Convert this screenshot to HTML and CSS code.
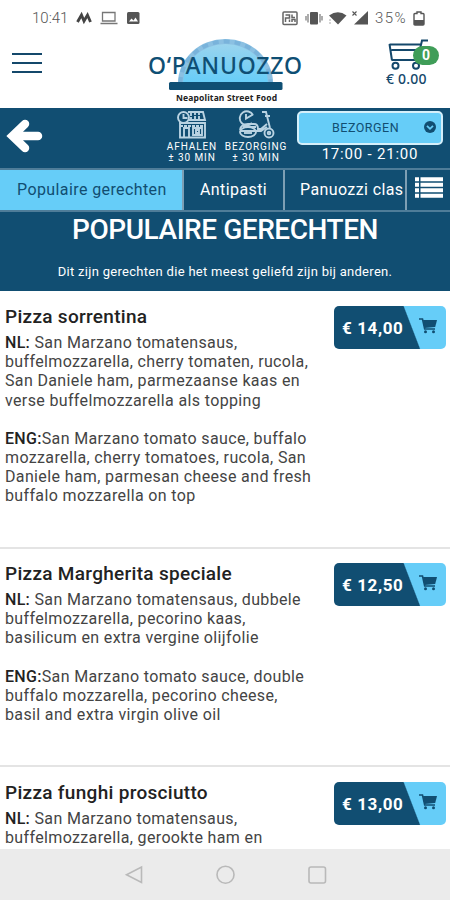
FILE: index.html
```html
<!DOCTYPE html>
<html lang="nl">
<head>
  <meta charset="UTF-8">
  <title>O'Panuozzo - Bestellen</title>
  <meta name="viewport" content="width=device-width, initial-scale=1.0">
  <link rel="stylesheet" href="styles.css">
</head>
<body>

  <svg class="sprite" width="0" height="0">
    <symbol id="cart" viewBox="0 0 18 16">
      <path d="M0 1h3.500l2.200 10H16" fill="none" stroke="currentColor" stroke-width="1.600"/>
      <path d="M4 2h14l-1.800 7L5.500 10z" fill="currentColor"/>
      <circle cx="6.500" cy="13.700" r="1.500" fill="currentColor"/>
      <circle cx="14.500" cy="13.700" r="1.500" fill="currentColor"/>
    </symbol>
  </svg>

  <div class="status">
    <span class="clock">10:41</span>
    <svg class="status-left" width="66" height="14" viewBox="0 0 66 14">
      <path d="M1.500 11 5.500 4 8 10 11.500 4 14.500 11" fill="none" stroke="#444" stroke-width="2.800"/>
      <path d="M26.500 1.500h12.500v8.500H26.500zM24.500 12.500h17" fill="none" stroke="#777" stroke-width="1.300"/>
      <rect x="51" y="1" width="12.500" height="12" rx="1.500" fill="#555"/>
      <path d="M53 10.500l2.500-3 2 2 2-3 2.500 4z" fill="#fff"/>
    </svg>
    <svg class="status-right" width="88" height="16" viewBox="0 0 88 16">
      <rect x="1" y="2" width="14" height="12.500" rx="1" fill="none" stroke="#666" stroke-width="1.500"/>
      <path d="M3.500 5h4v3h-4v4M7.500 12V9.500M10 4.500v3h3M10 12V9.500h3V12" fill="none" stroke="#666" stroke-width="1.500"/>
      <rect x="28" y="2" width="8" height="12.500" rx="1" fill="#555"/>
      <path d="M26 4v8.500M38 4v8.500M24 6v4.500M40 6v4.500" stroke="#777" stroke-width="1.200"/>
      <path d="M47 5.500q9-6.500 17.500 0L56 14.500z" fill="#555"/>
      <path d="M47 10h2M47 13h2" stroke="#aaa"/>
      <path d="M86 1v13.500H72z" fill="#555"/>
      <path d="M70.500 1.500l4 4M74.500 1.500l-4 4" stroke="#555" stroke-width="1.100"/>
    </svg>
    <span class="battery-text">35%</span>
    <svg width="12" height="15" viewBox="0 0 12 15">
      <path d="M1 3.500q0-1 1-1h2V1h4v1.500h2q1 0 1 1V13q0 1-1 1H2q-1 0-1-1z" fill="none" stroke="#555" stroke-width="1.400"/>
      <path d="M1 9h10v5H1z" fill="#555"/>
    </svg>
  </div>

  <header class="header">
    <div class="burger"><span></span><span></span><span></span></div>
    <svg class="logo" width="160" height="68" viewBox="145 38 160 68">
      <defs>
        <linearGradient id="sky" x1="0" y1="0" x2="0" y2="1">
          <stop offset="0" stop-color="#9ad4ee"/>
          <stop offset="1" stop-color="#66cdf8"/>
        </linearGradient>
      </defs>
      <path d="M178 83a47.500 44 0 0 1 95 0z" fill="#8bc0e2"/>
      <path d="M180.500 83a45 41.500 0 0 1 90 0" fill="none" stroke="#79b3db" stroke-width="4" stroke-dasharray="6 5"/>
      <path d="M183 83a42.500 39 0 0 1 85 0z" fill="url(#sky)"/>
      <rect x="169" y="82" width="113.500" height="8" rx="1.500" fill="#0f4f74"/>
      <text class="logo-name" x="148" y="73.500" textLength="154">O‘PANUOZZO</text>
      <text class="logo-sub" x="176" y="100.500" textLength="101">Neapolitan Street Food</text>
    </svg>
    <div class="basket">
      <svg width="42" height="32" viewBox="0 0 42 32">
        <path d="M40 2.500h-6L29.500 22H4M1.500 6.500h31.500M1.500 6l2.500 16.500M3.500 12h27" fill="none" stroke="#14486b" stroke-width="2"/>
        <circle cx="7.500" cy="27.800" r="3" fill="none" stroke="#14486b" stroke-width="2"/>
        <circle cx="28" cy="27.800" r="3" fill="none" stroke="#14486b" stroke-width="2"/>
      </svg>
      <span class="badge">0</span>
      <div class="total">€ 0.00</div>
    </div>
  </header>

  <section class="delivery">
    <svg class="back" width="38" height="36" viewBox="0 0 38 36">
      <path d="M20 6 7.500 18 20 30M9 18h24" fill="none" stroke="#fff" stroke-width="8.500" stroke-linecap="round"/>
    </svg>
    <div class="method">
      <svg width="32" height="29" viewBox="0 0 32 29" fill="none" stroke="#b9d3e2" stroke-width="1.900">
        <path d="M12 2h15l2 8H11M4 14v13.500h25V12M3 13h26"/>
        <path d="M15 3v8M19 2v9M23 2v9M4 16h25" stroke-dasharray="3 1"/>
        <path d="M8 27V18h5v9M17 18h9v7h-9zM20 20h3v3h-3z"/>
        <circle cx="7.500" cy="7.500" r="5.500" fill="#114e72"/>
        <path d="M7.500 4v4h4"/>
      </svg>
      <span>AFHALEN</span>
      <span>± 30 MIN</span>
    </div>
    <div class="method bezorging">
      <svg width="38" height="29" viewBox="0 0 38 29" fill="none" stroke="#b9d3e2" stroke-width="1.900">
        <path d="M16 5a7 7 0 1 0-1 8M9 4v4.500l7-4M25 2h4l4 16M28 6h5"/>
        <path d="M3 20q1-6 8-6h6q4 0 4 5h3l6-5M3 21h21l6-4M6 17h13"/>
        <ellipse cx="11" cy="22" rx="8" ry="5"/>
        <path d="M7 23h8"/>
        <circle cx="32" cy="23" r="4.500"/>
        <circle cx="32" cy="23" r="1.300"/>
      </svg>
      <span>BEZORGING</span>
      <span>± 30 MIN</span>
    </div>
    <div class="choice">
      <div class="select">
        <span>BEZORGEN</span>
        <svg width="12" height="12" viewBox="0 0 12 12">
          <circle cx="6" cy="6" r="6" fill="#114e72"/>
          <path d="M3 4.800 6 7.800l3-3" fill="none" stroke="#66cdf8" stroke-width="1.800"/>
        </svg>
      </div>
      <div class="hours">17:00 - 21:00</div>
    </div>
  </section>

  <nav class="tabs">
    <div class="tab active">Populaire gerechten</div>
    <div class="tab antipasti">Antipasti</div>
    <div class="tab panuozzi">Panuozzi clas</div>
    <div class="tab list">
      <svg width="28" height="21" viewBox="0 0 28 21">
        <path d="M0 2.200h4M0 7.700h4M0 13.200h4M0 18.700h4M5.500 2.200H28M5.500 7.700H28M5.500 13.200H28M5.500 18.700H28" stroke="#fff" stroke-width="4"/>
      </svg>
    </div>
  </nav>

  <section class="intro">
    <h1>POPULAIRE GERECHTEN</h1>
    <p>Dit zijn gerechten die het meest geliefd zijn bij anderen.</p>
  </section>

  <main class="menu">
    <article class="dish sorrentina">
      <div class="info">
        <h2>Pizza sorrentina</h2>
        <p><b>NL:</b> San Marzano tomatensaus,<br>buffelmozzarella, cherry tomaten, rucola,<br>San Daniele ham, parmezaanse kaas en<br>verse buffelmozzarella als topping</p>
        <p><b>ENG:</b>San Marzano tomato sauce, buffalo<br>mozzarella, cherry tomatoes, rucola, San<br>Daniele ham, parmesan cheese and fresh<br>buffalo mozzarella on top</p>
      </div>
      <div class="price"><span>€ 14,00</span><svg width="18" height="16"><use href="#cart"/></svg></div>
    </article>

    <article class="dish margherita">
      <div class="info">
        <h2>Pizza Margherita speciale</h2>
        <p><b>NL:</b> San Marzano tomatensaus, dubbele<br>buffelmozzarella, pecorino kaas,<br>basilicum en extra vergine olijfolie</p>
        <p><b>ENG:</b>San Marzano tomato sauce, double<br>buffalo mozzarella, pecorino cheese,<br>basil and extra virgin olive oil</p>
      </div>
      <div class="price"><span>€ 12,50</span><svg width="18" height="16"><use href="#cart"/></svg></div>
    </article>

    <article class="dish">
      <div class="info">
        <h2>Pizza funghi prosciutto</h2>
        <p><b>NL:</b> San Marzano tomatensaus,<br>buffelmozzarella, gerookte ham en</p>
      </div>
      <div class="price"><span>€ 13,00</span><svg width="18" height="16"><use href="#cart"/></svg></div>
    </article>
  </main>

  <footer class="navbar">
    <svg width="20" height="20" viewBox="0 0 20 20"><path d="M18.500 2v15.500L3.500 9.700z"/></svg>
    <svg width="20" height="20" viewBox="0 0 20 20"><circle cx="10.500" cy="9.700" r="8.500"/></svg>
    <svg width="20" height="20" viewBox="0 0 20 20"><rect x="2" y="2" width="16.500" height="16" rx="2"/></svg>
  </footer>

</body>
</html>
```
FILE: styles.css
```css
* {
  box-sizing: border-box;
}

body {
  margin: 0;
  width: 450px;
  height: 900px;
  overflow: hidden;
  display: flex;
  flex-direction: column;
  font-family: Roboto, Arial, sans-serif;
  background-color: #ffffff;
  color: #222;
}

svg {
  display: block;
  flex: none;
}

.sprite {
  display: none;
}

h1, h2, p {
  margin: 0;
}

/* status bar */
.status {
  height: 36px;
  flex: none;
  display: flex;
  align-items: center;
  padding: 0 25px 0 32px;
  font-size: 15px;
  font-weight: 300;
  color: #555;
}

.clock {
  width: 44px;
}

.status-right {
  margin-left: auto;
}

.battery-text {
  width: 38px;
  margin-left: 5px;
  letter-spacing: 1.4px;
}

/* header */
.header {
  height: 72px;
  flex: none;
  display: flex;
  align-items: flex-start;
  padding: 2px 10px 0 12px;
}

.burger {
  width: 30px;
  margin-top: 15px;
  display: flex;
  flex-direction: column;
  gap: 7px;
}

.burger span {
  height: 2px;
  background-color: #14486b;
}

.logo {
  margin-left: 103px;
}

.logo-name {
  font-family: "Noto Sans", sans-serif;
  font-size: 23px;
  font-weight: 500;
  fill: #0f4f74;
}

.logo-sub {
  font-family: "Noto Sans", sans-serif;
  font-size: 8.5px;
  font-weight: 700;
  fill: #222;
}

.basket {
  position: relative;
  width: 56px;
  margin-left: auto;
  padding-left: 2px;
}

.basket svg {
  margin-left: 2px;
}

.badge {
  position: absolute;
  left: 29px;
  top: 8px;
  width: 26px;
  height: 19px;
  border-radius: 10px;
  background-color: #3f9d58;
  color: #fff;
  font-size: 14px;
  font-weight: 700;
  line-height: 19px;
  text-align: center;
}

.total {
  font-family: "Noto Sans", sans-serif;
  font-size: 14px;
  font-weight: 500;
  line-height: 18px;
  letter-spacing: 0.2px;
  color: #14486b;
}

/* delivery bar */
.delivery {
  height: 60px;
  flex: none;
  display: flex;
  background-color: #114e72;
  color: #fff;
  padding-right: 7px;
}

.back {
  margin: 10px 0 0 5px;
}

.method {
  width: 54px;
  margin-left: 122px;
  padding-top: 2px;
  display: flex;
  flex-direction: column;
  align-items: center;
  font-size: 10px;
  line-height: 11px;
  letter-spacing: 0.9px;
  white-space: nowrap;
}

.method svg {
  margin-bottom: 2px;
}

.bezorging {
  width: 64px;
  margin-left: 5px;
}

.choice {
  width: 146px;
  margin: 3px 0 0 auto;
}

.select {
  height: 34px;
  border: 2px solid #d5effa;
  border-radius: 5px;
  background-color: #66cdf8;
  color: #114e72;
  display: flex;
  align-items: center;
  justify-content: space-between;
  padding: 0 5px 2px 33px;
  font-size: 12.5px;
  letter-spacing: 0.5px;
}

.hours {
  font-size: 15px;
  line-height: 19px;
  letter-spacing: 0.8px;
  text-align: center;
}

/* category tabs */
.tabs {
  height: 44px;
  flex: none;
  display: flex;
  background-color: #114e72;
  border-top: 2px solid #4f7d99;
  border-bottom: 2px solid #4f7d99;
}

.tab {
  padding-left: 16px;
  border-right: 2px solid #7d9fb4;
  color: #fff;
  font-size: 16px;
  line-height: 40px;
  letter-spacing: 0.4px;
  white-space: nowrap;
}

.active {
  width: 184px;
  padding-left: 17px;
  background-color: #66cdf8;
  color: #114e72;
}

.antipasti {
  width: 101px;
}

.panuozzi {
  width: 122px;
  padding-left: 15px;
}

.list {
  width: 43px;
  padding: 7px 0 0 8px;
  border-right: none;
}

/* category title */
.intro {
  height: 79px;
  flex: none;
  background-color: #114e72;
  color: #fff;
  text-align: center;
}

.intro h1 {
  font-size: 28px;
  font-weight: 500;
  line-height: 36px;
  letter-spacing: -0.45px;
}

.intro p {
  margin-top: 15px;
  font-size: 13px;
  line-height: 18px;
  letter-spacing: 0.3px;
}

/* dishes */
.menu {
  flex: 1;
  overflow: hidden;
}

.dish {
  display: flex;
  justify-content: space-between;
  align-items: flex-start;
  padding: 15px 4px 0 5px;
  border-bottom: 2px solid #e4e4e4;
}

.sorrentina {
  height: 258px;
}

.margherita {
  height: 218px;
  padding-top: 14px;
}

.info h2 {
  font-size: 19px;
  font-weight: 500;
  line-height: 22px;
  letter-spacing: 0.3px;
}

.info p {
  margin-bottom: 19px;
  font-size: 16px;
  line-height: 19.2px;
  letter-spacing: 0.36px;
  color: #444;
  white-space: nowrap;
}

.info h2 + p {
  margin-top: 5px;
}

.info b {
  font-weight: 500;
  letter-spacing: 0.3px;
  color: #222;
}

.price {
  width: 112px;
  height: 43px;
  border-radius: 5px;
  background: linear-gradient(69deg, #114e72 66.5%, #66cdf8 67.5%);
  color: #114e72;
  display: flex;
  align-items: center;
  justify-content: space-between;
  padding: 0 9px 0 8px;
}

.price span {
  color: #fff;
  font-size: 17px;
  font-weight: 700;
  letter-spacing: 0.6px;
}

.price svg {
  margin-bottom: 3px;
}

/* android navigation */
.navbar {
  height: 51px;
  flex: none;
  display: flex;
  justify-content: center;
  align-items: center;
  gap: 72px;
  background-color: #ebebeb;
  fill: none;
  stroke: #b9b9b9;
  stroke-width: 1.6;
}
```
